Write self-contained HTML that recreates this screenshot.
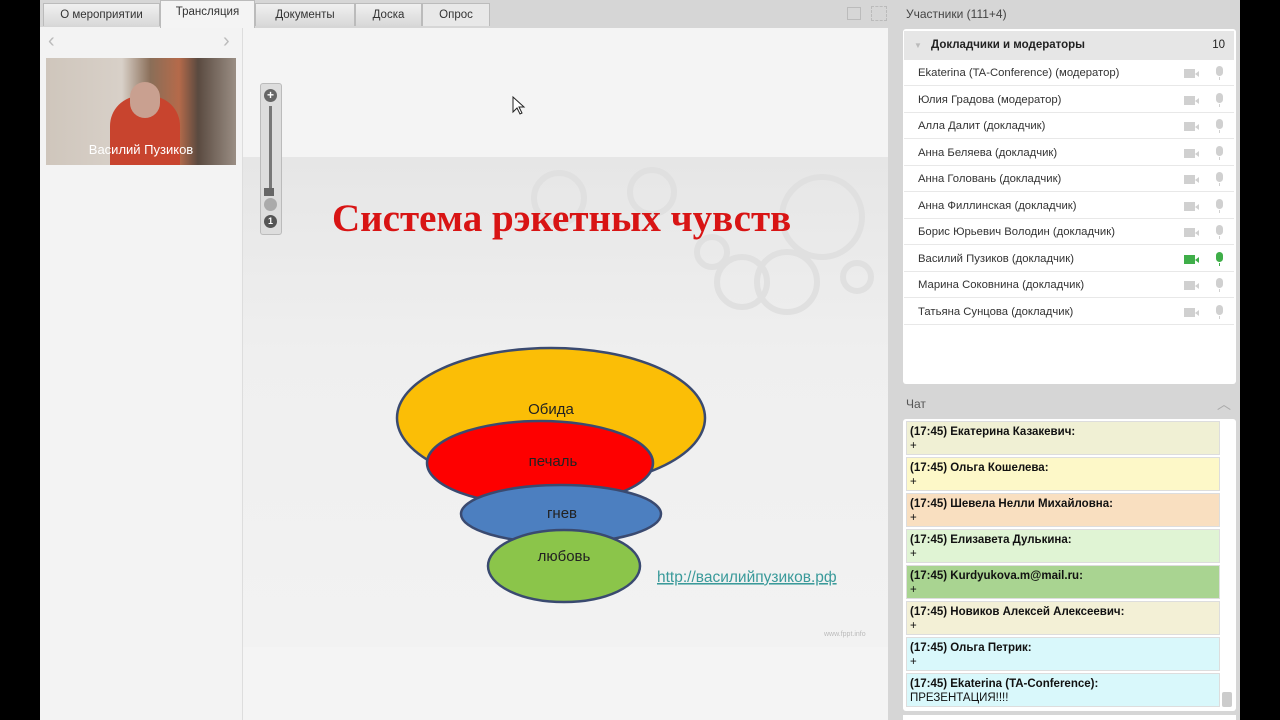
<!DOCTYPE html>
<html><head><meta charset="utf-8"><style>
*{margin:0;padding:0;box-sizing:border-box}
body{width:1280px;height:720px;background:#000;position:relative;overflow:hidden;font-family:"Liberation Sans",sans-serif;font-size:12px;color:#333}
.abs{position:absolute}
.tab{position:absolute;top:3px;height:23px;background:linear-gradient(#f0f0f0,#d8d8d8);border:1px solid #bbb;border-bottom:none;text-align:center;line-height:22px;font-size:11.5px;color:#333}
.row{position:absolute;left:904px;width:330px;height:26px;background:#fff;border-bottom:1px solid #e8e8e8;line-height:26px;padding-left:14px;font-size:11.3px;color:#333}
.cam{position:absolute;left:280px;top:9px;width:11px;height:9px;background:#d0d0d0}
.cam:after{content:"";position:absolute;left:11px;top:2px;border:3px solid transparent;border-right:4px solid #d0d0d0;border-left:none}
.mic{position:absolute;left:312px;top:6px;width:7px;height:10px;border-radius:4px;background:#d0d0d0}
.mic:after{content:"";position:absolute;left:3px;top:11px;width:1px;height:3px;background:#d0d0d0}
.g .cam{background:#3fae49}.g .cam:after{border-right-color:#3fae49}.g .mic,.g .mic:after{background:#3fae49}
.msg{position:absolute;left:906px;width:314px;height:34px;border:1px solid #ddd;padding:3px 3px;font-size:11.5px;line-height:14px;color:#111}
</style></head><body>
<div class="abs" style="left:40px;top:0;width:1200px;height:720px;background:#d6d6d6"></div>
<div class="tab" style="left:43px;width:117px">О мероприятии</div>
<div class="tab" style="left:160px;top:0;height:28px;width:95px;background:#f4f4f4;z-index:2">Трансляция</div>
<div class="tab" style="left:255px;width:100px">Документы</div>
<div class="tab" style="left:355px;width:67px">Доска</div>
<div class="tab" style="left:422px;width:68px;background:#e8e8e8">Опрос</div>
<div class="abs" style="left:847px;top:7px;width:14px;height:13px;border:1px solid #bbb"></div>
<div class="abs" style="left:871px;top:6px;width:16px;height:15px;border:1px dashed #bbb"></div>
<!-- left panel -->
<div class="abs" style="left:40px;top:27px;width:202px;height:693px;background:#f3f3f3"></div>
<div class="abs" style="left:48px;top:30px;font-size:20px;color:#bbb">‹</div>
<div class="abs" style="left:223px;top:30px;font-size:20px;color:#bbb">›</div>
<div class="abs" style="left:46px;top:58px;width:190px;height:107px;background:linear-gradient(90deg,#cfc6bc 0%,#d8d0c8 40%,#8a6e58 55%,#b56a4a 70%,#5a4a40 80%,#9a8e84 100%)"></div>
<div class="abs" style="left:110px;top:96px;width:70px;height:69px;border-radius:30px 30px 0 0;background:#c8442e"></div>
<div class="abs" style="left:130px;top:82px;width:30px;height:36px;border-radius:15px;background:#c9a090"></div>
<div class="abs" style="left:46px;top:142px;width:190px;text-align:center;color:#fff;font-size:13px">Василий Пузиков</div>
<!-- main slide -->
<div class="abs" style="left:242px;top:28px;width:646px;height:692px;background:#f4f4f4;border-left:1px solid #ddd"></div>
<div class="abs" style="left:243px;top:157px;width:645px;height:490px;background:linear-gradient(#e6e6e6,#efefef 40%,#f2f2f2)"></div>
<svg class="abs" style="left:242px;top:157px" width="646" height="180">
<g fill="none" stroke="#e0e0e0" stroke-width="6">
<circle cx="317" cy="41" r="25"/><circle cx="410" cy="35" r="22"/><circle cx="580" cy="60" r="40"/><circle cx="500" cy="125" r="25"/><circle cx="545" cy="125" r="30"/><circle cx="615" cy="120" r="14"/><circle cx="470" cy="95" r="15"/></g></svg>
<div class="abs" style="left:332px;top:196px;font-family:'Liberation Serif',serif;font-weight:bold;font-size:39px;color:#d81414;white-space:nowrap">Система рэкетных чувств</div>
<svg class="abs" style="left:0;top:0" width="1280" height="720">
<g stroke="#3a4a70" stroke-width="2.5">
<ellipse cx="551" cy="418" rx="154" ry="70" fill="#fbbe06"/>
<ellipse cx="540" cy="463" rx="113" ry="42" fill="#fe0000"/>
<ellipse cx="561" cy="514" rx="100" ry="29" fill="#4c7fc0"/>
<ellipse cx="564" cy="566" rx="76" ry="36" fill="#8bc54a"/>
</g>
<g font-family="Liberation Sans,sans-serif" font-size="15" fill="#222" text-anchor="middle">
<text x="551" y="414">Обида</text><text x="553" y="466">печаль</text><text x="562" y="518">гнев</text><text x="564" y="561">любовь</text></g>
<text x="657" y="582" font-family="Liberation Sans,sans-serif" font-size="15.5" fill="#3a9a9a" text-decoration="underline">http://василийпузиков.рф</text>
<text x="824" y="636" font-family="Liberation Sans,sans-serif" font-size="7" fill="#bbb">www.fppt.info</text>
<path d="M513 97 L513 112 L517 108 L520 114 L522 113 L519 107 L524 107 Z" fill="#fff" stroke="#222"/>
</svg>
<!-- zoom control -->
<div class="abs" style="left:260px;top:83px;width:22px;height:152px;background:#ddd;border:1px solid #bbb;border-radius:3px"></div>
<div class="abs" style="left:264px;top:89px;width:13px;height:13px;border-radius:50%;background:#666;color:#fff;font-size:12px;line-height:13px;text-align:center;font-weight:bold">+</div>
<div class="abs" style="left:269px;top:106px;width:3px;height:88px;background:#777"></div>
<div class="abs" style="left:264px;top:188px;width:10px;height:8px;background:#666"></div>
<div class="abs" style="left:264px;top:198px;width:13px;height:13px;border-radius:50%;background:#aaa"></div>
<div class="abs" style="left:264px;top:215px;width:13px;height:13px;border-radius:50%;background:#555;color:#fff;font-size:9px;line-height:13px;text-align:center;font-weight:bold">1</div>
<!-- right panel -->
<div class="abs" style="left:906px;top:7px;font-size:12px;color:#444">Участники (111+4)</div>
<div class="abs" style="left:903px;top:29px;width:333px;height:355px;background:#fff;border-radius:3px"></div>
<div class="abs" style="left:904px;top:31px;width:330px;height:29px;background:#e6e6e6;line-height:29px;font-weight:bold;font-size:11.5px;color:#222;padding-left:27px">Докладчики и модераторы<span style="position:absolute;right:9px;font-weight:normal">10</span><span style="position:absolute;left:10px;color:#bbb;font-size:8px">▼</span></div>
<div class="row" style="top:60px">Ekaterina (TA-Conference) (модератор)<i class="cam"></i><i class="mic"></i></div>
<div class="row" style="top:87px">Юлия Градова (модератор)<i class="cam"></i><i class="mic"></i></div>
<div class="row" style="top:113px">Алла Далит (докладчик)<i class="cam"></i><i class="mic"></i></div>
<div class="row" style="top:140px">Анна Беляева (докладчик)<i class="cam"></i><i class="mic"></i></div>
<div class="row" style="top:166px">Анна Головань (докладчик)<i class="cam"></i><i class="mic"></i></div>
<div class="row" style="top:193px">Анна Филлинская (докладчик)<i class="cam"></i><i class="mic"></i></div>
<div class="row" style="top:219px">Борис Юрьевич Володин (докладчик)<i class="cam"></i><i class="mic"></i></div>
<div class="row g" style="top:246px">Василий Пузиков (докладчик)<i class="cam"></i><i class="mic"></i></div>
<div class="row" style="top:272px">Марина Соковнина (докладчик)<i class="cam"></i><i class="mic"></i></div>
<div class="row" style="top:299px">Татьяна Сунцова (докладчик)<i class="cam"></i><i class="mic"></i></div>
<div class="abs" style="left:906px;top:397px;font-size:12px;color:#555">Чат</div>
<div class="abs" style="left:1217px;top:394px;font-size:14px;color:#aaa">︿</div>
<div class="abs" style="left:903px;top:419px;width:333px;height:292px;background:#fff;border-radius:3px"></div>
<div class="msg" style="top:421px;background:#f0f0d4"><b>(17:45) Екатерина Казакевич:</b><br>+</div>
<div class="msg" style="top:457px;background:#fdf8c8"><b>(17:45) Ольга Кошелева:</b><br>+</div>
<div class="msg" style="top:493px;background:#f9dfc0"><b>(17:45) Шевела Нелли Михайловна:</b><br>+</div>
<div class="msg" style="top:529px;background:#e0f4d4"><b>(17:45) Елизавета Дулькина:</b><br>+</div>
<div class="msg" style="top:565px;background:#a9d491"><b>(17:45) Kurdyukova.m@mail.ru:</b><br>+</div>
<div class="msg" style="top:601px;background:#f3f0d6"><b>(17:45) Новиков Алексей Алексеевич:</b><br>+</div>
<div class="msg" style="top:637px;background:#d9f8fb"><b>(17:45) Ольга Петрик:</b><br>+</div>
<div class="msg" style="top:673px;background:#d9f8fb"><b>(17:45) Ekaterina (TA-Conference):</b><br>ПРЕЗЕНТАЦИЯ!!!!</div>
<div class="abs" style="left:1222px;top:692px;width:10px;height:15px;background:#ccc;border-radius:2px"></div>
<div class="abs" style="left:903px;top:715px;width:333px;height:5px;background:#fff"></div>
</body></html>
